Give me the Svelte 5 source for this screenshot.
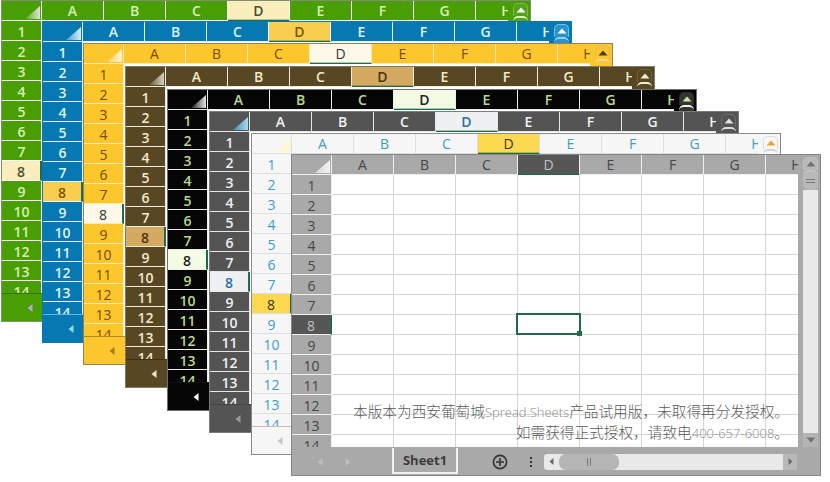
<script>
	const themes = ["green", "blue", "yellow", "brown", "black", "gray", "light", "main"];
	const columns = ["A", "B", "C", "D", "E", "F", "G", "H"];
	const rows = Array.from({ length: 14 }, (_, i) => i + 1);
</script>

<div class="desk">
	{#each themes as theme}
		<section class="sheet {theme}">
			<div class="body">
				<div class="pane">
					<div class="head">
						<div class="corner"><span class="tri"></span></div>
						{#each columns as col}
							<div class="col" class:sel={col === "D"}>{col}</div>
						{/each}
					</div>
					<div class="content">
						<div class="rowhead">
							{#each rows as r}
								<div class="row" class:sel={r === 8}>{r}</div>
							{/each}
						</div>
						<!-- only the front sheet shows its cells, the others are covered -->
						{#if theme === "main"}
							<div class="cells">
								{#each rows as r}
									<div class="line">
										{#each columns as col}
											<div class="cell">
												{#if r === 8 && col === "D"}
													<span class="active"><i></i></span>
												{/if}
											</div>
										{/each}
									</div>
								{/each}
							</div>
						{/if}
					</div>
				</div>
				<div class="vscroll">
					<div class="vbtn">
						<svg width="10" height="6" viewBox="0 0 10 6"><path d="M5 0.5 9.5 5.5H0.5Z" /></svg>
					</div>
					<div class="vthumb"><i></i><i></i></div>
					<div class="vtrack"></div>
					<div class="vbtn down">
						<svg width="10" height="6" viewBox="0 0 10 6"><path d="M5 5.5 9.5 0.5H0.5Z" /></svg>
					</div>
				</div>
			</div>
			<div class="foot">
				<div class="nav">
					<svg width="6" height="8" viewBox="0 0 6 8"><path d="M5.5 0 0.5 4 5.5 8Z" /></svg>
					<svg width="6" height="8" viewBox="0 0 6 8"><path d="M0.5 0 5.5 4 0.5 8Z" /></svg>
				</div>
				<div class="tab">Sheet1</div>
				<svg class="add" width="16" height="16" viewBox="0 0 16 16">
					<circle cx="8" cy="8" r="6.6" />
					<path d="M8 4v8M4 8h8" />
				</svg>
				<div class="dots"><i></i><i></i><i></i></div>
				<div class="hscroll">
					<span class="hleft">
						<svg width="5" height="7" viewBox="0 0 5 7"><path d="M4.5 0 0.5 3.5 4.5 7Z" /></svg>
					</span>
					<span class="hthumb"><i></i><i></i></span>
					<span class="hright">
						<svg width="5" height="7" viewBox="0 0 5 7"><path d="M0.5 0 4.5 3.5 0.5 7Z" /></svg>
					</span>
				</div>
			</div>
		</section>
	{/each}

	<div class="mark">
		<p>本版本为西安葡萄城<span>Spread.Sheets</span>产品试用版，未取得再分发授权。</p>
		<p>如需获得正式授权，请致电<span>400-657-6008</span>。</p>
	</div>
</div>

<style>
	:global(body) {
		background: #fff;
	}
	.desk {
		position: relative;
		width: 830px;
		height: 482px;
		overflow: hidden;
		font-family: "Open Sans", "Noto Sans", sans-serif;
	}

	.sheet {
		position: absolute;
		box-sizing: border-box;
		width: 530px;
		height: 322px;
		display: flex;
		flex-direction: column;
		border: 1px solid var(--frame);
		background: #fff;
	}
	.green { left: 1px; top: 0; --bg: #489e02; --fg: #d9efb4; --sel: #fbeebd; --selfg: #4a4a3a; --rule: #fff; --frame: #7f8f70; --weight: 600; --triA: #5fa52a; --triB: #dbe8d0; --arrow: #fff; --nav: #b5a6d8; --btn: #55a318; --edge: #7dbb50; --corner: #d9efb4; --footline: #35730a; }
	.blue { left: 42px; top: 21px; --bg: #0679b3; --fg: #dff2ff; --sel: #f8ce4f; --selfg: #7a5600; --rule: #e6f4fb; --frame: #0679b3; --weight: 600; --triA: #3f9ed2; --triB: #d8effb; --arrow: #fff; --nav: #8fd8f2; --btn: #2a92cb; --edge: #6cc0ea; --corner: #8fd0f0; --footline: #5db6e0; }
	.yellow { left: 83px; top: 43px; --bg: #fcc62d; --fg: #7a4a00; --sel: #fdf8e8; --selfg: #333; --rule: #fde9b0; --frame: #94825e; --weight: 400; --triA: #fbd25a; --triB: #fdf3cf; --arrow: #4d3a18; --nav: #a87c18; --btn: #fcc62d; --edge: #e3b868; --corner: #f3d8a0; --footline: #b48a1e; }
	.brown { left: 125px; top: 66px; --bg: #574722; --fg: #f5e9ca; --sel: #d4a962; --selfg: #4a3510; --rule: #f3ecdc; --frame: #827a68; --weight: 600; --triA: #6d5c3a; --triB: #d6cfc0; --arrow: #f4ebd4; --nav: #eee6d6; --btn: #574722; --edge: #6e5f3e; --corner: #f4ebd4; --footline: #3c3016; }
	.black { left: 167px; top: 89px; --bg: #060606; --fg: #b8da8c; --sel: #f3fbe5; --selfg: #222; --rule: #eee; --frame: #6f6f6f; --weight: 600; --triA: #222; --triB: #e4e4e4; --arrow: #c6ea9a; --nav: #fff; --btn: #343434; --edge: #2a2a2a; --corner: #eee; --footline: #111; }
	.gray { left: 209px; top: 111px; --bg: #545454; --fg: #f1f1f1; --sel: #eef0f2; --selfg: #2a6fa8; --rule: #e8e8e8; --frame: #7c7c7c; --weight: 600; --triA: #3f8cb4; --triB: #a7d9ee; --arrow: #e0e0e0; --nav: #9a9a9a; --btn: #545454; --edge: #6c6c6c; --corner: #ddd; --footline: #444; }
	.light { left: 251px; top: 133px; --bg: #f6f6f6; --fg: #3c9dcb; --sel: #fcd94e; --selfg: #3a3210; --rule: #dedede; --frame: #8a8a8a; --weight: 400; --triA: #f8f6e2; --triB: #fcf7cf; --arrow: #ee9f36; --nav: #c4c4c4; --btn: #f8f8f8; --edge: #dcdcdc; --corner: #d4d4d4; --footline: #d8b4b4; }
	.main { left: 291px; top: 154px; --bg: #a9a9a9; --fg: #464646; --sel: #565656; --selfg: #c0c0c0; --rule: #f0f0f0; --frame: #858585; --weight: 400; --triA: #d8d8d8; --triB: #f4f4f4; --arrow: #707070; --nav: #bdbdbd; --btn: #b9b9b9; --edge: #c0c0c0; --corner: #c4c4c4; --footline: #a9a9a9; }

	.body {
		display: flex;
		height: 292px;
	}
	.pane {
		width: 506px;
		overflow: hidden;
	}
	.head {
		display: flex;
		height: 20px;
		font-size: 14px;
		font-weight: var(--weight);
	}
	.corner,
	.col {
		box-sizing: border-box;
		flex: none;
		height: 20px;
		background: var(--bg);
		color: var(--fg);
		border-right: 1px solid var(--rule);
		border-bottom: 1px solid var(--rule);
		display: flex;
		align-items: center;
		justify-content: center;
	}
	.corner {
		width: 40px;
		position: relative;
	}
	.tri {
		position: absolute;
		right: 1px;
		bottom: 1px;
		width: 15px;
		height: 13px;
		clip-path: polygon(100% 0, 100% 100%, 0 100%);
		background: linear-gradient(to right, var(--triA), var(--triB));
	}
	.col {
		width: 62px;
	}
	.col.sel {
		background: var(--sel);
		color: var(--selfg);
		border-bottom: 1px solid #1e6b4c;
		box-shadow: inset 0 -1px 0 #1e6b4c55;
	}
	.content {
		display: flex;
		height: 272px;
		overflow: hidden;
	}
	.rowhead {
		flex: none;
		width: 40px;
		font-size: 14px;
		font-weight: var(--weight);
	}
	.row {
		box-sizing: border-box;
		height: 20px;
		padding-top: 1px;
		background: var(--bg);
		color: var(--fg);
		border-right: 1px solid var(--rule);
		border-bottom: 1px solid var(--rule);
		display: flex;
		align-items: center;
		justify-content: center;
	}
	.row.sel {
		background: var(--sel);
		color: var(--selfg);
		border-right: 2px solid #1e6b4c;
	}
	.cells {
		flex: none;
	}
	.line {
		display: flex;
	}
	.cell {
		box-sizing: border-box;
		position: relative;
		flex: none;
		width: 62px;
		height: 20px;
		border-right: 1px solid #d6d6d6;
		border-bottom: 1px solid #d6d6d6;
	}
	.active {
		position: absolute;
		z-index: 1;
		left: -2px;
		top: -2px;
		box-sizing: border-box;
		width: 65px;
		height: 22px;
		border: 2px solid #22694b;
	}
	.active i {
		position: absolute;
		right: -3px;
		bottom: -3px;
		width: 5px;
		height: 5px;
		background: #22694b;
	}

	.vscroll {
		box-sizing: border-box;
		width: 22px;
		display: flex;
		flex-direction: column;
		align-items: center;
		background: var(--bg);
		padding: 2px 0 0 3px;
	}
	.vbtn {
		box-sizing: border-box;
		flex: none;
		width: 15px;
		height: 13px;
		border: 1px solid var(--edge);
		border-bottom: none;
		border-radius: 5px 5px 0 0;
		background: var(--btn);
		display: flex;
		align-items: center;
		justify-content: center;
	}
	.vbtn svg {
		fill: var(--arrow);
	}
	.vbtn.down {
		border: none;
		border-radius: 0;
		background: #b4b4b4;
		height: 14px;
	}
	.vthumb {
		box-sizing: border-box;
		flex: none;
		width: 15px;
		height: 20px;
		border-top: 2px solid var(--corner);
		border-radius: 5px;
		background: var(--btn);
		display: flex;
		flex-direction: column;
		align-items: center;
		justify-content: center;
		gap: 2px;
	}
	.vthumb i {
		width: 9px;
		height: 1px;
		background: #777;
	}
	.vtrack {
		flex: 1;
		width: 15px;
		background: #e9e9e9;
	}

	.foot {
		box-sizing: border-box;
		display: flex;
		align-items: center;
		height: 28px;
		background: var(--bg);
		border-top: 1px solid var(--footline);
	}
	.nav {
		flex: none;
		width: 100px;
		display: flex;
		gap: 22px;
		padding-left: 25px;
		box-sizing: border-box;
	}
	.nav svg {
		fill: var(--nav);
	}
	.tab {
		box-sizing: border-box;
		flex: none;
		width: 66px;
		height: 26px;
		margin-top: -2px;
		border: 2px solid #f2f2f2;
		border-top: none;
		display: flex;
		align-items: center;
		justify-content: center;
		font-size: 13px;
		font-weight: 700;
		color: #3c3c3c;
	}
	.add {
		flex: none;
		margin-left: 34px;
		fill: none;
		stroke: #333;
		stroke-width: 1.6;
	}
	.dots {
		flex: none;
		margin-left: 22px;
		display: flex;
		flex-direction: column;
		gap: 2px;
	}
	.dots i {
		width: 2px;
		height: 2px;
		background: #333;
	}
	.hscroll {
		flex: none;
		box-sizing: border-box;
		display: flex;
		align-items: center;
		width: 253px;
		height: 16px;
		margin-left: 12px;
		background: #e9e9e9;
		border-radius: 3px 0 0 3px;
	}
	.hleft {
		flex: none;
		width: 15px;
		display: flex;
		justify-content: center;
	}
	.hleft svg,
	.hright svg {
		fill: #6a6a6a;
	}
	.hthumb {
		flex: none;
		width: 60px;
		height: 16px;
		background: #b5b5b5;
		border-radius: 7px;
		display: flex;
		align-items: center;
		justify-content: center;
		gap: 2px;
	}
	.hthumb i {
		width: 1px;
		height: 8px;
		background: #777;
	}
	.hright {
		flex: none;
		width: 14px;
		height: 16px;
		margin-left: auto;
		background: #b9b9b9;
		display: flex;
		align-items: center;
		justify-content: center;
	}

	.mark {
		position: absolute;
		right: 41px;
		top: 400px;
		text-align: right;
		font-family: "Noto Sans CJK SC", "Noto Sans", sans-serif;
		font-size: 14.67px;
		font-weight: 300;
		color: #5c5c5c;
		pointer-events: none;
	}
	.mark p {
		margin: 0;
		height: 21px;
		line-height: 21px;
	}
	.mark span {
		font-family: "Open Sans", sans-serif;
		font-size: 13px;
		line-height: 1;
		color: #8a8a8a;
	}
</style>
